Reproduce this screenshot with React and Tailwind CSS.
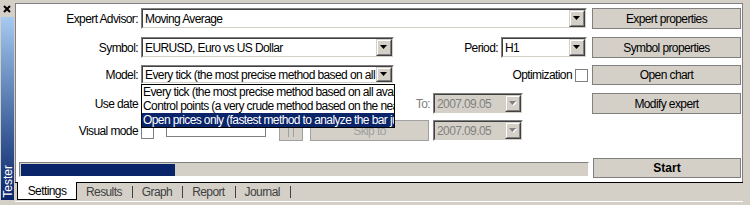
import React from "react";

function Arrow({ disabled }) {
  return (
    <div className="w-[16px] h-full shrink-0 border border-t-[#d4d0c8] border-l-[#d4d0c8] border-b-[#404040] border-r-[#404040] bg-[#d4d0c8]">
      <div className="w-full h-full border border-t-white border-l-white border-b-[#808080] border-r-[#808080] flex items-center justify-center">
        <svg width="8" height="5" viewBox="0 0 8 5">
          {disabled && <path d="M1 1h7L4.5 5z" fill="#fff" />}
          <path d="M0 0h7L3.5 4z" fill={disabled ? "#808080" : "#000"} />
        </svg>
      </div>
    </div>
  );
}

function Combo({ className, text, disabled }) {
  return (
    <div className={`flex shrink-0 border border-t-[#808080] border-l-[#808080] border-b-white border-r-white ${className}`}>
      <div className={`flex flex-1 min-w-0 border border-t-[#404040] border-l-[#404040] border-b-[#d4d0c8] border-r-[#d4d0c8] ${disabled ? "bg-[#d4d0c8]" : "bg-white"}`}>
        <div className={`flex-1 min-w-0 overflow-hidden whitespace-nowrap pl-[2px] flex items-center ${disabled ? "text-[#808080]" : "text-black"}`}>
          {text}
        </div>
        <Arrow disabled={disabled} />
      </div>
    </div>
  );
}

function Button({ className, children, disabled }) {
  return (
    <div className={`shrink-0 border ${disabled ? "border-[#a0a0a0] text-[#a0a0a0]" : "border-[#808080] text-black"} bg-[#d4d0c8] flex items-center justify-center ${className}`}>
      {children}
    </div>
  );
}

function Check({ className }) {
  return <div className={`w-[13px] h-[13px] shrink-0 border border-[#808080] bg-white ${className}`} />;
}

function Label({ className, children }) {
  return <div className={`shrink-0 flex items-center justify-end whitespace-nowrap ${className}`}>{children}</div>;
}

export default function App() {
  return (
    <div className="w-[750px] h-[205px] bg-[#d4d0c8] flex overflow-hidden text-[12px] tracking-[-0.6px] leading-none text-black font-['Liberation_Sans',Arial,sans-serif]">
      {/* Left docking strip */}
      <div className="w-[15px] shrink-0 flex flex-col">
        <div className="h-[17px] flex items-center pl-[3px] pt-[1px]">
          <svg width="8" height="8" viewBox="0 0 8 8">
            <path d="M1 1l6 6M7 1l-6 6" stroke="#000" strokeWidth="2" />
          </svg>
        </div>
        <div className="ml-[1px] w-[13px] h-[183px] bg-gradient-to-b from-[#a6caf0] to-[#0a246a] flex flex-col justify-end items-center pb-[2px]">
          <span className="[writing-mode:vertical-rl] rotate-180 text-white text-[12px] tracking-normal">Tester</span>
        </div>
      </div>

      {/* Main column */}
      <div className="w-[728px] shrink-0 flex flex-col pt-[3px]">
        <div className="relative h-[179px] bg-white border-t border-l border-r border-[#808080] flex flex-col">
          {/* Row 1 */}
          <div className="flex h-[21px] mt-[4px]">
            <Label className="w-[122px]">Expert Advisor:</Label>
            <Combo className="ml-[3px] w-[446px]" text="Moving Average" />
            <Button className="ml-[5px] w-[149px]">Expert properties</Button>
          </div>
          {/* Row 2 */}
          <div className="flex h-[21px] mt-[8px]">
            <Label className="w-[122px]">Symbol:</Label>
            <Combo className="ml-[3px] w-[253px]" text="EURUSD, Euro vs US Dollar" />
            <Label className="w-[104px]">Period:</Label>
            <Combo className="ml-[3px] w-[86px]" text="H1" />
            <Button className="ml-[5px] w-[149px]">Symbol properties</Button>
          </div>
          {/* Row 3 */}
          <div className="flex h-[20px] mt-[7px] items-start">
            <Label className="w-[122px] h-[19px]">Model:</Label>
            <Combo className="ml-[3px] w-[253px] h-[19px]" text="Every tick (the most precise method based on all a" />
            <Label className="w-[178px] h-[20px]">Optimization</Label>
            <Check className="ml-[3px] mt-[4px]" />
            <Button className="ml-[4px] w-[149px] h-[20px]">Open chart</Button>
          </div>
          {/* Row 4 */}
          <div className="flex h-[21px] mt-[8px] items-center">
            <Label className="w-[122px] h-full">Use date</Label>
            <Check className="ml-[3px]" />
            <Label className="w-[276px] h-full text-[#808080]">To:</Label>
            <Combo className="ml-[3px] w-[90px] h-full" text="2007.09.05" disabled />
            <Button className="ml-[69px] w-[149px] h-full">Modify expert</Button>
          </div>
          {/* Row 5 */}
          <div className="flex h-[21px] mt-[6px] items-center">
            <Label className="w-[122px] h-full">Visual mode</Label>
            <Check className="ml-[3px] mt-[4px]" />
            <div className="ml-[12px] w-[100px] h-[10px] mt-[3px] shrink-0 border border-[#808080] bg-white" />
            <Button className="ml-[13px] w-[24px] h-full" disabled>
              <span className="flex gap-[4px] mt-[2px]">
                <span className="w-px h-[11px] bg-[#a0a0a0]" />
                <span className="w-px h-[11px] bg-[#a0a0a0]" />
              </span>
            </Button>
            <Button className="ml-[7px] w-[119px] h-full" disabled>Skip to</Button>
            <Combo className="ml-[4px] w-[90px] h-full" text="2007.09.05" disabled />
          </div>
          {/* Progress + Start */}
          <div className="flex h-[20px] mt-[17px]">
            <div className="ml-[3px] mt-[4px] w-[570px] h-[15px] shrink-0 bg-[#d4d0c8] border-t border-l border-[#808080] border-b border-b-white border-r border-r-white flex items-center pl-px">
              <div className="w-[154px] h-[12px] bg-[#0a246a]" />
            </div>
            <Button className="ml-[4px] w-[148px] h-full font-bold tracking-normal">Start</Button>
          </div>

          {/* Open dropdown list of Model */}
          <div className="absolute left-[125px] top-[80px] w-[254px] h-[44px] border border-black bg-white flex flex-col">
            <div className="h-[14px] pl-[1px] flex items-center whitespace-nowrap overflow-hidden">Every tick (the most precise method based on all avai</div>
            <div className="h-[14px] pl-[1px] flex items-center whitespace-nowrap overflow-hidden">Control points (a very crude method based on the nea</div>
            <div className="h-[14px] pl-[1px] flex items-center whitespace-nowrap overflow-hidden bg-[#0a246a] text-white">Open prices only (fastest method to analyze the bar ju</div>
          </div>
        </div>

        {/* Tabs */}
        <div className="flex h-[18px]">
          <div className="w-[2px] border-t border-black" />
          <div className="w-[60px] bg-white border-l border-r border-b border-black flex items-center justify-center">Settings</div>
          <div className="flex-1 border-t border-black flex items-center pl-[9px] text-[#404040]">
            <span>Results</span>
            <span className="ml-[10px] w-px h-[12px] bg-[#404040]" />
            <span className="ml-[9px]">Graph</span>
            <span className="ml-[10px] w-px h-[12px] bg-[#404040]" />
            <span className="ml-[9px]">Report</span>
            <span className="ml-[10px] w-px h-[12px] bg-[#404040]" />
            <span className="ml-[9px]">Journal</span>
            <span className="ml-[10px] w-px h-[12px] bg-[#404040]" />
          </div>
        </div>
        <div className="mt-[1px] border-t border-white h-[4px]" />
      </div>
    </div>
  );
}
